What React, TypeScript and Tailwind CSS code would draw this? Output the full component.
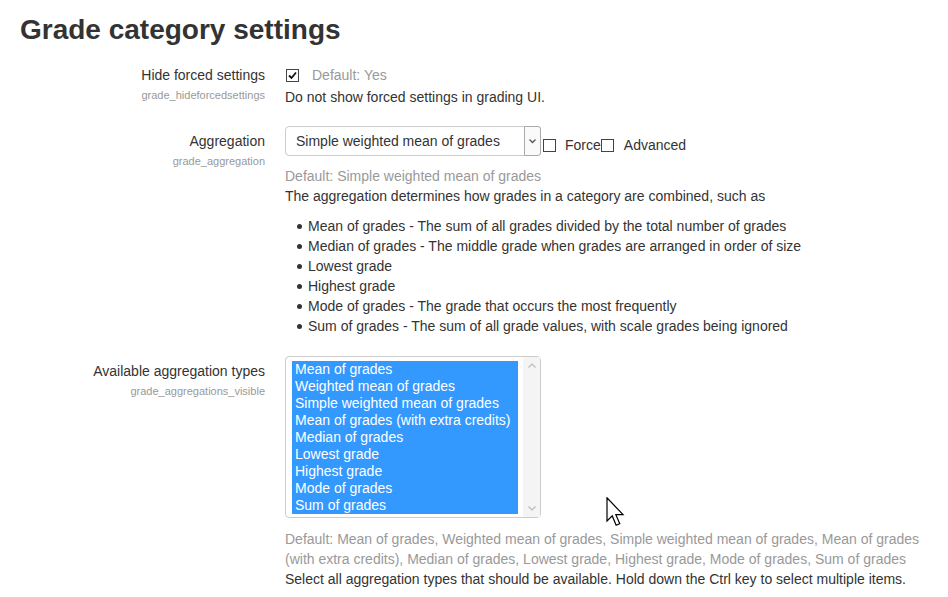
import React from "react";

const explanations = [
  "Mean of grades - The sum of all grades divided by the total number of grades",
  "Median of grades - The middle grade when grades are arranged in order of size",
  "Lowest grade",
  "Highest grade",
  "Mode of grades - The grade that occurs the most frequently",
  "Sum of grades - The sum of all grade values, with scale grades being ignored",
];

const aggregationTypes = [
  "Mean of grades",
  "Weighted mean of grades",
  "Simple weighted mean of grades",
  "Mean of grades (with extra credits)",
  "Median of grades",
  "Lowest grade",
  "Highest grade",
  "Mode of grades",
  "Sum of grades",
];

const Checkbox: React.FC<{ checked?: boolean }> = ({ checked }) => (
  <span className="w-[13px] h-[13px] border border-[#444] bg-white flex items-center justify-center shrink-0">
    {checked && (
      <svg width="9" height="9" viewBox="0 0 9 9">
        <path d="M1 4.5 L3.5 7 L8 1.5" stroke="#111" strokeWidth="1.8" fill="none" />
      </svg>
    )}
  </span>
);

const Label: React.FC<{ title: string; name: string; top?: string }> = ({
  title,
  name,
  top = "pt-0",
}) => (
  <div className={`w-[245px] shrink-0 text-right ${top}`}>
    <div className="leading-[20px]">{title}</div>
    <div className="text-[11px] leading-[20px] text-[#999]">{name}</div>
  </div>
);

export default function App() {
  return (
    <div className="relative w-[948px] h-[597px] overflow-hidden bg-white px-5 font-['Liberation_Sans',Arial,sans-serif] text-[14px] text-[#333]">
      <h2 className="pt-[10px] text-[28px] font-bold leading-[40px]">
        Grade category settings
      </h2>

      {/* Hide forced settings */}
      <div className="flex gap-5 mt-[15px]">
        <Label title="Hide forced settings" name="grade_hideforcedsettings" />
        <div>
          <div className="flex items-center h-[20px] pl-[1px]">
            <Checkbox checked />
            <span className="ml-[13px] text-[#999]">Default: Yes</span>
          </div>
          <div className="mt-[2px] leading-[20px]">
            Do not show forced settings in grading UI.
          </div>
        </div>
      </div>

      {/* Aggregation */}
      <div className="flex gap-5 mt-[19px]">
        <Label title="Aggregation" name="grade_aggregation" top="pt-[5px]" />
        <div>
          <div className="flex items-start">
            <div className="w-[256px] h-[30px] border border-[#ccc] rounded-[4px] flex bg-white">
              <span className="flex-1 pl-[10px] leading-[28px]">
                Simple weighted mean of grades
              </span>
              <span className="w-[17px] h-[30px] -mt-[1px] -mr-[1px] border border-[#aaa] rounded-r-[3px] bg-[#fafafa] flex justify-center pt-[12px]">
                <svg width="7" height="5" viewBox="0 0 7 5">
                  <path d="M0.5 0.5 L3.5 3.5 L6.5 0.5" stroke="#555" strokeWidth="1.3" fill="none" />
                </svg>
              </span>
            </div>
            <div className="flex items-center h-[20px] mt-[9px] ml-[2px]">
              <Checkbox />
              <span className="ml-[9px]">Force</span>
              <Checkbox />
              <span className="ml-[10px]">Advanced</span>
            </div>
          </div>
          <div className="mt-[10px] leading-[20px] text-[#999]">
            Default: Simple weighted mean of grades
          </div>
          <div className="leading-[20px]">
            The aggregation determines how grades in a category are combined, such as
          </div>
          <ul className="mt-[10px]">
            {explanations.map((item) => (
              <li key={item} className="flex items-center leading-[20px] pl-[12px]">
                <span className="w-[5px] h-[5px] rounded-full bg-[#333] mr-[6px] shrink-0" />
                {item}
              </li>
            ))}
          </ul>
        </div>
      </div>

      {/* Available aggregation types */}
      <div className="flex gap-5 mt-[20px]">
        <Label
          title="Available aggregation types"
          name="grade_aggregations_visible"
          top="pt-[5px]"
        />
        <div>
          <div className="w-[256px] h-[162px] border border-[#ccc] rounded-[4px] bg-white flex pl-[6px] pt-[4px]">
            <div className="w-[226px] h-[153px] bg-[#3399ff] text-white">
              {aggregationTypes.map((t) => (
                <div key={t} className="leading-[17px] pl-[3px] whitespace-nowrap">
                  {t}
                </div>
              ))}
            </div>
            <div className="ml-auto w-[17px] -mt-[4px] h-[160px] bg-[#f4f4f4] flex flex-col items-center justify-between py-[6px]">
              <svg width="8" height="5" viewBox="0 0 8 5">
                <path d="M0.5 4.5 L4 1 L7.5 4.5" stroke="#bbb" strokeWidth="1.2" fill="none" />
              </svg>
              <svg width="8" height="5" viewBox="0 0 8 5">
                <path d="M0.5 0.5 L4 4 L7.5 0.5" stroke="#bbb" strokeWidth="1.2" fill="none" />
              </svg>
            </div>
          </div>
          <div className="mt-[11px] leading-[20px] text-[#999]">
            Default: Mean of grades, Weighted mean of grades, Simple weighted mean of grades, Mean of grades
            <br />
            (with extra credits), Median of grades, Lowest grade, Highest grade, Mode of grades, Sum of grades
          </div>
          <div className="leading-[20px]">
            Select all aggregation types that should be available. Hold down the Ctrl key to select multiple items.
          </div>
        </div>
      </div>

      {/* mouse pointer */}
      <svg
        className="absolute left-[606px] top-[497px]"
        width="20"
        height="30"
        viewBox="0 0 13 20"
      >
        <path
          d="M0.5 0.5 L0.5 16 L4 12.6 L6.6 18.8 L9 17.8 L6.4 11.8 L11.2 11.8 Z"
          fill="#fff"
          stroke="#000"
          strokeWidth="0.8"
          strokeLinejoin="miter"
        />
      </svg>
    </div>
  );
}
